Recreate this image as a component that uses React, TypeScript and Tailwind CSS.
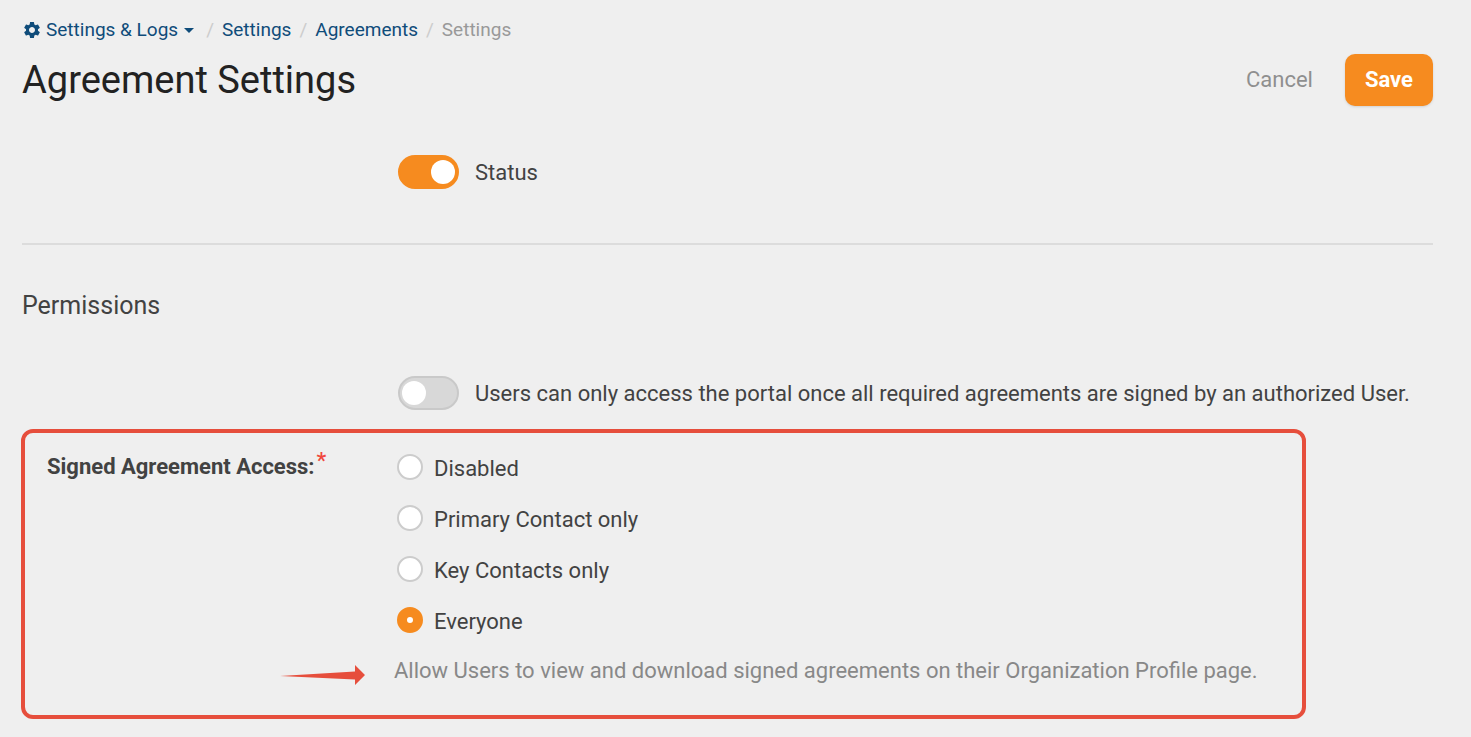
import { useState } from "react";
import { MdSettings } from "react-icons/md";

const breadcrumbs = [
  { label: "Settings", href: "#settings" },
  { label: "Agreements", href: "#agreements" },
];

const accessOptions = [
  { value: "disabled", label: "Disabled" },
  { value: "primary", label: "Primary Contact only" },
  { value: "key", label: "Key Contacts only" },
  { value: "everyone", label: "Everyone" },
];

type ToggleProps = {
  id: string;
  label: string;
  checked: boolean;
  onChange: (checked: boolean) => void;
};

const Toggle = ({ id, label, checked, onChange }: ToggleProps) => (
  <div className="flex items-center gap-4 pl-[376px]">
    <input
      id={id}
      type="checkbox"
      role="switch"
      checked={checked}
      onChange={(e) => onChange(e.target.checked)}
      className="flex h-[34px] w-[61px] shrink-0 cursor-pointer appearance-none items-center rounded-full border-2 border-[#c9c9c9] bg-[#d8d8d8] px-[2px] before:size-6 before:rounded-full before:bg-white checked:justify-end checked:border-[#f68b1f] checked:bg-[#f68b1f]"
    />
    <label htmlFor={id} className="cursor-pointer pt-0.5">
      {label}
    </label>
  </div>
);

const Separator = () => (
  <span aria-hidden="true" className="px-2 text-[#cccccc]">
    /
  </span>
);

const Breadcrumbs = () => (
  <nav aria-label="Breadcrumb" className="flex items-center text-[19px] leading-7 text-[#0f4c7a]">
    <a href="#logs" className="mr-1 flex items-center">
      <MdSettings className="mr-1 size-5" />
      Settings &amp; Logs
      <svg viewBox="0 0 10 5" className="ml-[6px] h-[5px] w-[10px]" fill="currentColor">
        <path d="M0 0h10L5 5z" />
      </svg>
    </a>

    {breadcrumbs.map((item) => (
      <span key={item.href} className="flex items-center">
        <Separator />
        <a href={item.href}>{item.label}</a>
      </span>
    ))}

    <Separator />
    <span className="text-[#999999]">Settings</span>
  </nav>
);

const App = () => {
  const [isEnabled, setIsEnabled] = useState(true);
  const [isRestricted, setIsRestricted] = useState(false);
  const [access, setAccess] = useState("everyone");

  return (
    <main className="min-h-screen bg-[#efefef] pt-4 pr-[38px] pb-4 pl-[22px] font-['Roboto',sans-serif] text-[22px] leading-8 text-[#424242]">
      <Breadcrumbs />

      <header className="mt-[10px] flex items-center justify-between">
        <h1 className="text-[38px] leading-[52px] text-[#222222]">Agreement Settings</h1>

        <div className="flex items-center gap-8">
          <button type="button" className="cursor-pointer text-[#8f8f8f]">
            Cancel
          </button>
          <button
            type="button"
            className="h-[52px] cursor-pointer rounded-[10px] bg-[#f68b1f] px-5 font-bold text-white shadow"
          >
            Save
          </button>
        </div>
      </header>

      <section className="mt-[49px] border-b-2 border-[#dcdcdc] pb-[54px]">
        <Toggle id="status" label="Status" checked={isEnabled} onChange={setIsEnabled} />
      </section>

      <section>
        <h2 className="mt-[45px] mb-[54px] text-[25px] leading-8">Permissions</h2>

        <Toggle
          id="restrict"
          label="Users can only access the portal once all required agreements are signed by an authorized User."
          checked={isRestricted}
          onChange={setIsRestricted}
        />

        <fieldset
          aria-labelledby="access-label"
          className="mt-[19px] mr-[127px] -ml-px flex rounded-xl border-4 border-[#e64e3c] pt-2 pb-7 pl-[22px]"
        >
          <div id="access-label" className="w-[350px] shrink-0 leading-[51px] font-bold">
            Signed Agreement Access:
            <span className="ml-[2px] align-[6px] leading-none font-medium text-[#f0483e]">*</span>
          </div>

          <div>
            {accessOptions.map((option) => (
              <div key={option.value} className="flex h-[51px] items-center gap-[11px]">
                <input
                  id={option.value}
                  type="radio"
                  name="access"
                  value={option.value}
                  checked={access === option.value}
                  onChange={() => setAccess(option.value)}
                  className="size-[26px] cursor-pointer appearance-none rounded-full border-2 border-[#cccccc] bg-white checked:border-[10px] checked:border-[#f68b1f]"
                />
                <label htmlFor={option.value} className="cursor-pointer pt-1">
                  {option.label}
                </label>
              </div>
            ))}

            <div className="relative mt-[10px] -ml-[3px]">
              <svg
                viewBox="0 0 86 22"
                className="absolute top-[9px] right-full mr-7 h-[22px] w-[86px]"
                fill="#e64e3c"
                aria-hidden="true"
              >
                <path d="M0 12 75 7.500V1L85 11 75 21V15.500Z" />
              </svg>
              <p className="text-[#888888]">
                Allow Users to view and download signed agreements on their Organization Profile page.
              </p>
            </div>
          </div>
        </fieldset>
      </section>
    </main>
  );
};

export default App;
